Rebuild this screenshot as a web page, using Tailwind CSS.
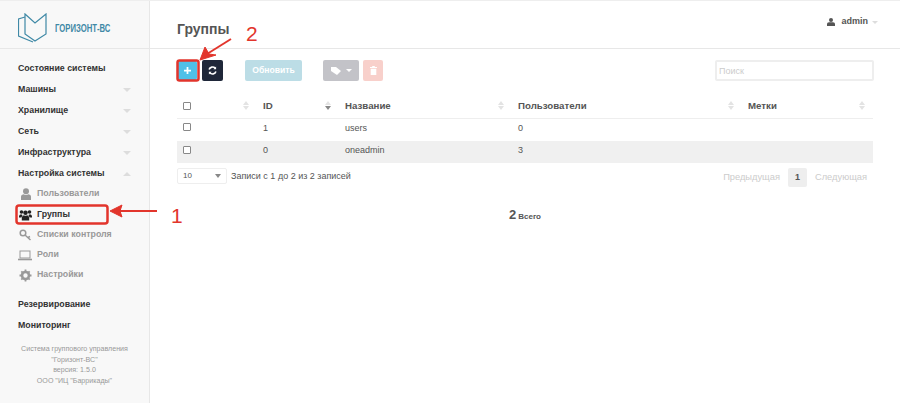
<!DOCTYPE html>
<html lang="ru">

<head>
    <meta charset="UTF-8" />
    <title>Группы</title>
    <script src="https://cdn.jsdelivr.net/npm/@tailwindcss/browser@4"></script>
</head>

<body class="bg-white [font-family:'Liberation_Sans',Arial,sans-serif] text-[#555]">
    <div class="relative flex w-[900px] h-[403px] overflow-hidden border-t border-[#eee]">
        <!-- Sidebar -->
        <aside class="w-[150px] shrink-0 bg-[#f8f8f8] border-r border-[#e7e7e7] flex flex-col">
            <div class="h-[48px] shrink-0 border-b border-[#e7e7e7] flex items-center pl-[18px] gap-[8px]">
                <svg width="29" height="30" viewBox="0 0 29 30" fill="none" stroke="#3f89a6" stroke-width="1.200" class="mt-[7px]">
                    <path d="M7 4 L0.500 6 V23 L15 29" />
                    <path d="M7 1 L17 10 L28 1 V21 L17 28 L7 21 Z" />
                </svg>
                <span class="text-[#3f89a6] text-[11px] font-bold scale-x-[0.7] origin-left whitespace-nowrap mt-[7px]">ГОРИЗОНТ-ВС</span>
            </div>
            <nav class="pl-[18px] pr-[16px] pt-[9px] text-[8.800px] font-bold text-[#333]">
                <div class="h-[21px] flex items-center">Состояние системы</div>
                <div class="h-[21px] flex items-center justify-between">Машины<span class="w-0 h-0 border-x-[4px] border-x-transparent border-t-[4px] border-t-[#ddd] mr-[2px]"></span></div>
                <div class="h-[21px] flex items-center justify-between">Хранилище<span class="w-0 h-0 border-x-[4px] border-x-transparent border-t-[4px] border-t-[#ddd] mr-[2px]"></span></div>
                <div class="h-[21px] flex items-center justify-between">Сеть<span class="w-0 h-0 border-x-[4px] border-x-transparent border-t-[4px] border-t-[#ddd] mr-[2px]"></span></div>
                <div class="h-[21px] flex items-center justify-between">Инфраструктура<span class="w-0 h-0 border-x-[4px] border-x-transparent border-t-[4px] border-t-[#ddd] mr-[2px]"></span></div>
                <div class="h-[21px] flex items-center justify-between">Настройка системы<span class="w-0 h-0 border-x-[4px] border-x-transparent border-b-[4px] border-b-[#ddd] mr-[2px]"></span></div>
                <div class="h-[20px] flex items-center text-[#999] pl-[2px] gap-[5px]">
                    <svg class="w-[12px] h-[12px] shrink-0" viewBox="0 0 12 12" fill="#999"><circle cx="6" cy="3.200" r="3" /><path d="M1 12 V8.500 Q1 6.500 3.500 6.300 Q6 7.500 8.500 6.300 Q11 6.500 11 8.500 V12 Z" /></svg>
                    Пользователи
                </div>
                <div class="h-[20px] mt-[1px] flex items-center text-[#333] pl-[1px] gap-[5px]">
                    <svg class="w-[13px] h-[12px] shrink-0" viewBox="0 0 13 11" fill="#222"><circle cx="2.500" cy="2.500" r="1.800" /><circle cx="10.500" cy="2.500" r="1.800" /><circle cx="6.500" cy="3.300" r="2.300" /><path d="M0 7 Q0 5 2 4.800 L3.500 5.500 L2.500 8 H0 Z M13 7 Q13 5 11 4.800 L9.500 5.500 L10.500 8 H13 Z M2.800 11 V8.500 Q3 6 5 5.800 Q6.500 6.800 8 5.800 Q10 6 10.200 8.500 V11 Z" /></svg>
                    Группы
                </div>
                <div class="h-[20px] flex items-center text-[#999] pl-[1px] gap-[5px]">
                    <svg class="w-[13px] h-[12px] shrink-0" viewBox="0 0 13 12" fill="none" stroke="#999" stroke-width="1.500"><circle cx="4" cy="4" r="2.800" /><path d="M6 6 L11.500 11 M9 8.500 L11 7.500" /></svg>
                    Списки контроля
                </div>
                <div class="h-[20px] flex items-center text-[#999] gap-[5px]">
                    <svg class="w-[14px] h-[11px] shrink-0" viewBox="0 0 14 11" fill="none" stroke="#999"><rect x="2" y="1" width="10" height="7" /><path d="M0 9.500 H14" stroke-width="1.600" /></svg>
                    Роли
                </div>
                <div class="h-[20px] flex items-center text-[#999] pl-[1px] gap-[5px]">
                    <svg class="w-[13px] h-[13px] shrink-0" viewBox="0 0 13 13"><circle cx="6.500" cy="6.500" r="3.500" fill="none" stroke="#999" stroke-width="2.600" /><path d="M6.500 0.500 V12.500 M0.500 6.500 H12.500 M2.300 2.300 L10.700 10.700 M10.700 2.300 L2.300 10.700" stroke="#999" stroke-width="1.800" stroke-dasharray="2 8.500" /></svg>
                    Настройки
                </div>
                <div class="h-[21px] flex items-center mt-[9px]">Резервирование</div>
                <div class="h-[21px] flex items-center">Мониторинг</div>
            </nav>
            <div class="mt-[8px] text-center text-[7.100px] leading-[10.500px] text-[#999]">
                <p>Система группового управления</p>
                <p>"Горизонт-ВС"</p>
                <p>версия: 1.5.0</p>
                <p>ООО "ИЦ "Баррикады"</p>
            </div>
        </aside>

        <!-- Main -->
        <main class="flex-1 min-w-0">
            <header class="h-[48px] border-b border-[#e7e7e7] flex justify-between pl-[27px] pr-[22px]">
                <h1 class="text-[14px] font-bold text-[#555] mt-[19px] leading-[18px]">Группы</h1>
                <div class="flex items-center h-[14px] mt-[14px] text-[9px] font-bold">
                    <svg class="w-[8px] h-[8px] mr-[6px]" viewBox="0 0 8 8" fill="#555"><circle cx="4" cy="2" r="2" /><path d="M0 8 V6 Q0 4.300 2 4.200 H6 Q8 4.300 8 6 V8 Z" /></svg>
                    admin
                    <span class="w-0 h-0 ml-[4px] border-x-[3px] border-x-transparent border-t-[3px] border-t-[#ddd]"></span>
                </div>
            </header>

            <div class="pl-[27px] pr-[26px]">
                <!-- Toolbar -->
                <div class="h-[21px] mt-[11px] flex items-center">
                    <button class="w-[19px] h-[19px] ml-[1px] rounded-[2px] bg-[#4fc0e8] text-white flex items-center justify-center">
                        <svg class="w-[7px] h-[7px]" viewBox="0 0 8 8" fill="none" stroke="#fff" stroke-width="2"><path d="M4 0 V8 M0 4 H8" /></svg>
                    </button>
                    <button class="w-[21px] h-[21px] ml-[5px] rounded-[2px] bg-[#1f2739] flex items-center justify-center">
                        <svg class="w-[9px] h-[9px]" viewBox="0 0 10 10" fill="none" stroke="#fff" stroke-width="1.800"><path d="M1.200 4 A4 4 0 0 1 8 2.500 M8.800 6 A4 4 0 0 1 2 7.500" /><path d="M9 0.500 V3.500 H6 Z M1 9.500 V6.500 H4 Z" fill="#fff" stroke="none" /></svg>
                    </button>
                    <button class="w-[57px] h-[21px] ml-[22px] rounded-[2px] bg-[#bcdde6] text-white text-[8.600px] font-bold">Обновить</button>
                    <button class="w-[36px] h-[21px] ml-[21px] rounded-[2px] bg-[#c3c3c8] flex items-center justify-center gap-[5px]">
                        <svg class="w-[10px] h-[8px]" viewBox="0 0 10 8" fill="#fff"><path d="M0 0 H5 L10 4 L6 8 L0 4 Z" /></svg>
                        <span class="w-0 h-0 border-x-[3px] border-x-transparent border-t-[3px] border-t-white"></span>
                    </button>
                    <button class="w-[20px] h-[21px] ml-[4px] rounded-[2px] bg-[#f8d0cb] flex items-center justify-center">
                        <svg class="w-[7px] h-[9px]" viewBox="0 0 7 9" fill="#fff"><path d="M0 1 H2.200 V0 H4.800 V1 H7 V2 H0 Z M0.700 2.700 H6.300 V9 H0.700 Z" /></svg>
                    </button>
                    <input class="w-[159px] h-[21px] ml-auto px-[2px] border-2 border-[#eee] rounded-[2px] text-[9px] placeholder:text-[#ccc] bg-white" placeholder="Поиск" />
                </div>

                <!-- Table -->
                <table class="mt-[13px] w-[696px] table-fixed border-collapse text-[9px] leading-[13px]">
                    <thead class="font-bold text-left text-[#555]">
                        <tr class="h-[24px] border-b border-[#eee] text-[9.700px]">
                            <th class="w-[76px] pl-[6px]">
                                <div class="flex items-center justify-between pr-[4px]"><span class="w-[8px] h-[8px] border border-[#888] rounded-[1px] bg-white"></span>
                                    <span class="flex flex-col gap-[1px]"><span class="w-0 h-0 border-x-[3px] border-x-transparent border-b-[4px] border-b-[#e3e3e3]"></span><span class="w-0 h-0 border-x-[3px] border-x-transparent border-t-[4px] border-t-[#e3e3e3]"></span></span>
                                </div>
                            </th>
                            <th class="w-[82px] pl-[10px]">
                                <div class="flex items-center justify-between pr-[4px]">ID
                                    <span class="flex flex-col gap-[1px]"><span class="w-0 h-0 border-x-[3px] border-x-transparent border-b-[4px] border-b-[#e3e3e3]"></span><span class="w-0 h-0 border-x-[3px] border-x-transparent border-t-[4px] border-t-[#888]"></span></span>
                                </div>
                            </th>
                            <th class="w-[173px] pl-[10px]">
                                <div class="flex items-center justify-between pr-[4px]">Название
                                    <span class="flex flex-col gap-[1px]"><span class="w-0 h-0 border-x-[3px] border-x-transparent border-b-[4px] border-b-[#e3e3e3]"></span><span class="w-0 h-0 border-x-[3px] border-x-transparent border-t-[4px] border-t-[#e3e3e3]"></span></span>
                                </div>
                            </th>
                            <th class="w-[230px] pl-[10px]">
                                <div class="flex items-center justify-between pr-[4px]">Пользователи
                                    <span class="flex flex-col gap-[1px]"><span class="w-0 h-0 border-x-[3px] border-x-transparent border-b-[4px] border-b-[#e3e3e3]"></span><span class="w-0 h-0 border-x-[3px] border-x-transparent border-t-[4px] border-t-[#e3e3e3]"></span></span>
                                </div>
                            </th>
                            <th class="pl-[10px]">
                                <div class="flex items-center justify-between pr-[8px]">Метки
                                    <span class="flex flex-col gap-[1px]"><span class="w-0 h-0 border-x-[3px] border-x-transparent border-b-[4px] border-b-[#e3e3e3]"></span><span class="w-0 h-0 border-x-[3px] border-x-transparent border-t-[4px] border-t-[#e3e3e3]"></span></span>
                                </div>
                            </th>
                        </tr>
                    </thead>
                    <tbody>
                        <tr class="h-[23px]">
                            <td class="pl-[6px]"><span class="block w-[8px] h-[8px] border border-[#888] rounded-[1px] bg-white -mt-[5px]"></span></td>
                            <td class="pl-[10px] align-top pt-[3px]">1</td>
                            <td class="pl-[10px] align-top pt-[3px]">users</td>
                            <td class="pl-[10px] align-top pt-[3px]">0</td>
                            <td></td>
                        </tr>
                        <tr class="h-[22px] bg-[#f0f0f0]">
                            <td class="pl-[6px]"><span class="block w-[8px] h-[8px] border border-[#888] rounded-[1px] bg-white -mt-[5px]"></span></td>
                            <td class="pl-[10px] align-top pt-[3px]">0</td>
                            <td class="pl-[10px] align-top pt-[3px]">oneadmin</td>
                            <td class="pl-[10px] align-top pt-[3px]">3</td>
                            <td></td>
                        </tr>
                    </tbody>
                </table>

                <!-- Footer of the table -->
                <div class="flex items-center h-[16px] mt-[5px] text-[9px]">
                    <div class="w-[50px] h-[16px] border border-[#eee] rounded-[2px] flex items-center justify-between px-[5px] text-[8px]">
                        10
                        <span class="w-0 h-0 border-x-[3px] border-x-transparent border-t-[4px] border-t-[#888]"></span>
                    </div>
                    <span class="ml-[4px] mt-[1px]">Записи с 1 до 2 из 2 записей</span>
                    <div class="ml-auto flex items-center text-[#ccc] text-[9.300px] mr-[7px] mt-[3px]">
                        Предыдущая
                        <span class="w-[19px] h-[19px] mx-[8px] bg-[#eee] rounded-[2px] text-[#555] font-bold text-[9px] flex items-center justify-center">1</span>
                        Следующая
                    </div>
                </div>

                <div class="mt-[21px] flex items-baseline justify-center gap-[2px] text-[#555] font-bold text-[8px] pr-[1px]">
                    <span class="text-[13px]">2</span> Всего
                </div>
            </div>
        </main>

        <!-- Annotations -->
        <svg class="absolute left-0 top-[-1px]" width="900" height="403" viewBox="0 0 900 403" fill="none">
            <rect x="16.500" y="205.500" width="91" height="18" rx="2.500" stroke="#e2352c" stroke-width="2.500" />
            <rect x="177.500" y="60.500" width="21" height="20" rx="2" stroke="#e2352c" stroke-width="2.500" />
            <path d="M157 211 H118" stroke="#e2352c" stroke-width="2" />
            <path d="M110 211 L122 205 L120 211 L122 217 Z" fill="#e2352c" stroke="#e2352c" stroke-linejoin="round" />
            <path d="M231 39 L207 54" stroke="#e2352c" stroke-width="2" />
            <path d="M200 60 L205 47 L209 54 L216 55 Z" fill="#e2352c" stroke="#e2352c" stroke-linejoin="round" />
        </svg>
        <span class="absolute left-[171px] top-[203px] text-[21px] leading-[24px] text-[#e2352c]">1</span>
        <span class="absolute left-[246px] top-[21px] text-[21px] leading-[24px] text-[#e2352c]">2</span>
    </div>
</body>

</html>
